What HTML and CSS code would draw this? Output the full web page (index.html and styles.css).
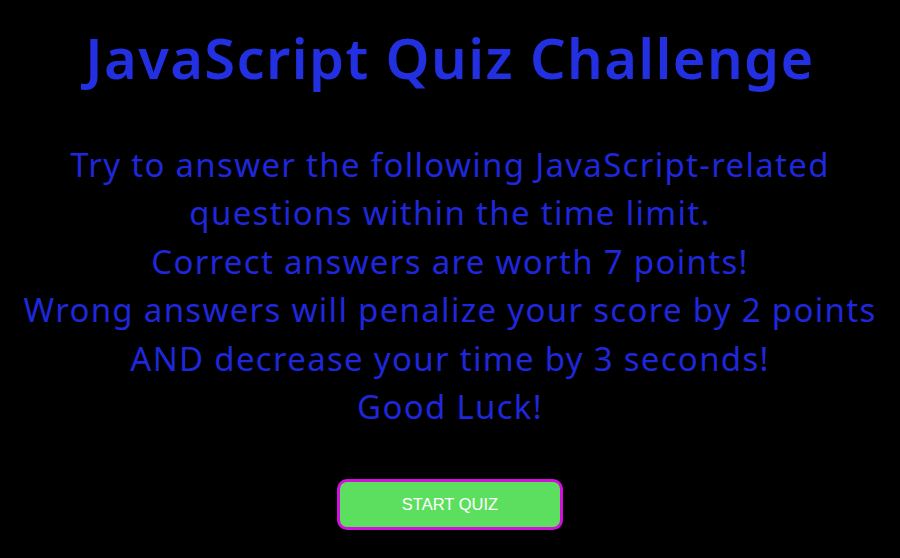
FILE: index.html
```html
<!DOCTYPE html>
<html lang="en">
<head>
<meta charset="utf-8">
<title>JavaScript Quiz Challenge</title>
<link rel="stylesheet" href="styles.css">
</head>
<body>
<main class="intro">
  <h1 class="title">JavaScript Quiz Challenge</h1>
  <p class="rules">
    <span class="line">Try to answer the following JavaScript-related</span>
    <span class="line">questions within the time limit.</span>
    <span class="line">Correct answers are worth 7 points!</span>
    <span class="line">Wrong answers will penalize your score by 2 points</span>
    <span class="line">AND decrease your time by 3 seconds!</span>
    <span class="line">Good Luck!</span>
  </p>
  <button class="start" type="button">START QUIZ</button>
</main>
</body>
</html>
```
FILE: styles.css
```css
html, body {
  margin: 0;
  padding: 0;
  background: #000;
}
body {
  width: 900px;
  height: 558px;
  overflow: hidden;
}
.intro {
  display: flex;
  flex-direction: column;
  align-items: center;
  padding-top: 19px;
}
.title {
  margin: 0;
  font-family: "Noto Sans", sans-serif;
  font-weight: 600;
  font-size: 56px;
  line-height: 76px;
  color: #2330e2;
  letter-spacing: 1.4px;
}
.rules {
  margin: 46px 0 0;
  display: flex;
  flex-direction: column;
  align-items: center;
  font-family: "Noto Sans", sans-serif;
  font-size: 33px;
  line-height: 48.4px;
  color: #1f27dc;
  letter-spacing: 1.3px;
}
.line {
  display: block;
  white-space: nowrap;
}
.start {
  margin-top: 48px;
  width: 226px;
  height: 51px;
  background: #5cdf5e;
  border: 3px solid #d20fdc;
  border-radius: 10px;
  color: #fff;
  font-family: "Liberation Sans", Arial, sans-serif;
  font-size: 16.5px;
  padding: 0;
}
```
